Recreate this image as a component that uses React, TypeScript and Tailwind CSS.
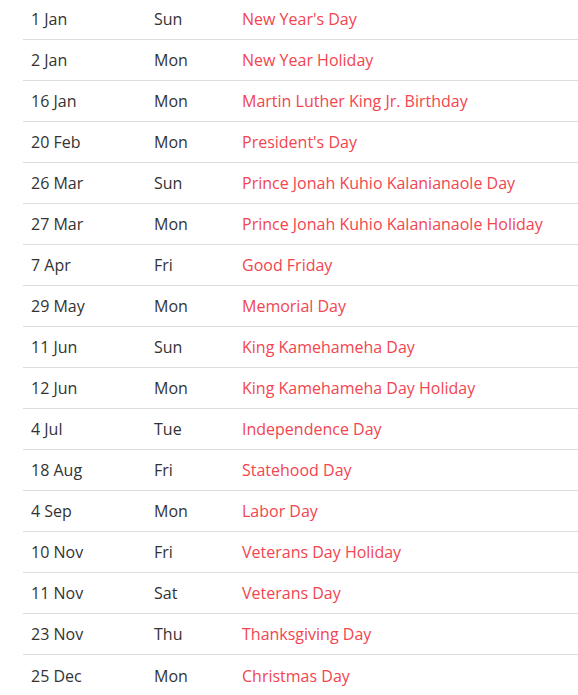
import React from "react";

const rows: [string, string, string][] = [
  ["1 Jan", "Sun", "New Year's Day"],
  ["2 Jan", "Mon", "New Year Holiday"],
  ["16 Jan", "Mon", "Martin Luther King Jr. Birthday"],
  ["20 Feb", "Mon", "President's Day"],
  ["26 Mar", "Sun", "Prince Jonah Kuhio Kalanianaole Day"],
  ["27 Mar", "Mon", "Prince Jonah Kuhio Kalanianaole Holiday"],
  ["7 Apr", "Fri", "Good Friday"],
  ["29 May", "Mon", "Memorial Day"],
  ["11 Jun", "Sun", "King Kamehameha Day"],
  ["12 Jun", "Mon", "King Kamehameha Day Holiday"],
  ["4 Jul", "Tue", "Independence Day"],
  ["18 Aug", "Fri", "Statehood Day"],
  ["4 Sep", "Mon", "Labor Day"],
  ["10 Nov", "Fri", "Veterans Day Holiday"],
  ["11 Nov", "Sat", "Veterans Day"],
  ["23 Nov", "Thu", "Thanksgiving Day"],
  ["25 Dec", "Mon", "Christmas Day"],
];

export default function App() {
  return (
    <div className="w-[578px] h-[695px] overflow-hidden bg-white" style={{ fontFamily: '"Open Sans", sans-serif' }}>
      <div className="ml-[23px] -mt-px text-[16px]">
        {rows.map(([d, w, h], i) => (
          <div
            key={i}
            className={`grid grid-cols-[123px_88px_1fr] h-[41px] items-center ${i < rows.length - 1 ? "border-b border-[#dddddd]" : ""}`}
          >
            <div className="pl-2 text-[#333333]">{d}</div>
            <div className="pl-2 text-[#333333]">{w}</div>
            <div className="pl-2 text-[#f2454f] whitespace-nowrap">{h}</div>
          </div>
        ))}
      </div>
    </div>
  );
}
